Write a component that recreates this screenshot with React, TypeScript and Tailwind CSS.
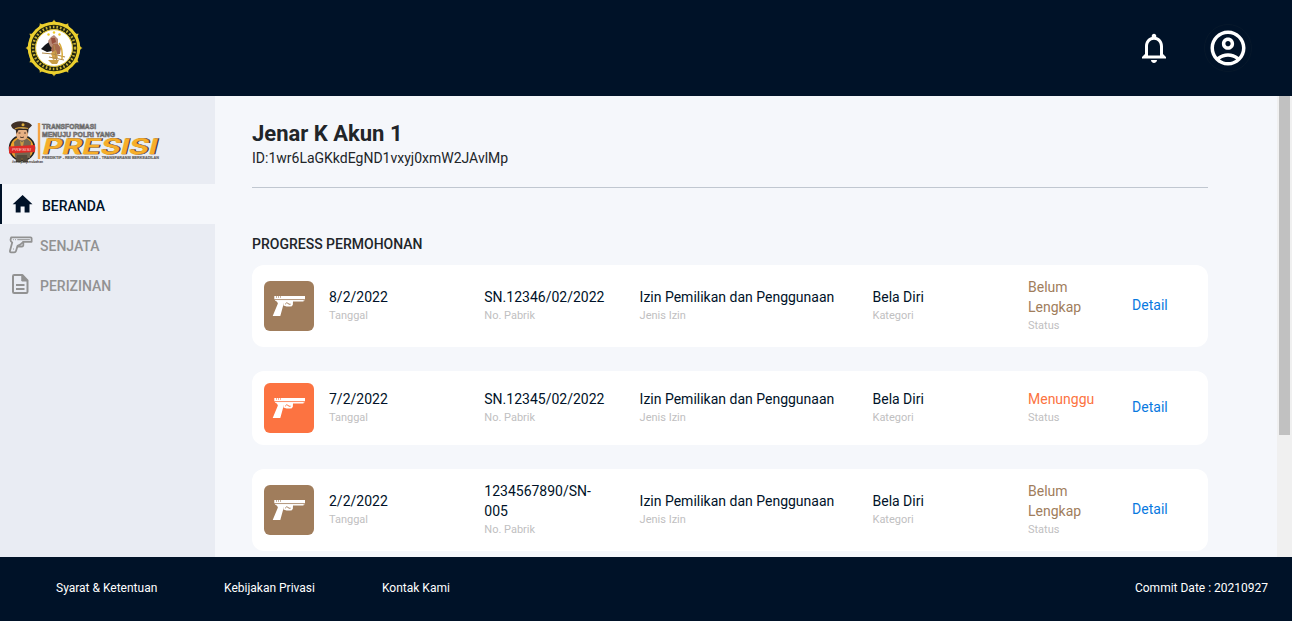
import React from "react";

type Tone = "brown" | "orange";

interface Permit {
  date: string;
  serial: string;
  status: string;
  tone: Tone;
}

const permits: Permit[] = [
  { date: "8/2/2022", serial: "SN.12346/02/2022", status: "Belum Lengkap", tone: "brown" },
  { date: "7/2/2022", serial: "SN.12345/02/2022", status: "Menunggu", tone: "orange" },
  { date: "2/2/2022", serial: "1234567890/SN-005", status: "Belum Lengkap", tone: "brown" },
];

const tileTone: Record<Tone, string> = {
  brown: "bg-[#a07d5c] text-[#a07d5c]",
  orange: "bg-[#fc7341] text-[#fc7341]",
};
const textTone: Record<Tone, string> = { brown: "text-[#a07d5c]", orange: "text-[#fc7341]" };

const spikes = Array.from({ length: 12 }, (_, i) => i * 30);

function Emblem() {
  return (
    <svg width="58" height="58" viewBox="0 0 58 58" className="block">
      {spikes.map((a) => (
        <path key={a} d="M22 5 Q28 3.500 29 .5 Q30 3.500 36 5 Z" fill="#e3c52c" transform={`rotate(${a} 29 29)`} />
      ))}
      <circle cx="29" cy="29" r="26.300" fill="#ecd02e" />
      <circle cx="29" cy="29" r="21" fill="none" stroke="#20240f" strokeWidth="4.400" />
      <circle cx="29" cy="29" r="21" fill="none" stroke="#c8b236" strokeWidth="2.600" strokeDasharray="1.600 2" />
      <circle cx="29" cy="29" r="18.400" fill="#fff" stroke="#d8bd33" strokeWidth="1" />
      <g fill="#f0cc28">
        <circle cx="23.500" cy="15.500" r="1.200" />
        <circle cx="29" cy="13.500" r="1.200" />
        <circle cx="34.500" cy="15.500" r="1.200" />
      </g>
      <path d="M16 30 L20 26 L24 23 L27 28 L27 32 L22 33 Z" fill="#15161a" />
      <path d="M23 22 L26 18 L29 16 L33 20 L33 27 L28 30 L25 27 Z" fill="#b88a76" />
      <path d="M26 19 L30 19 L31 23 L27 25 Z" fill="#97503e" />
      <path d="M28 25 L33 25 L36 29 L35 35 L29 36 L26 31 Z" fill="#a76b4f" />
      <path d="M26 34 L31 31 L33 39 L28 41 Z" fill="#d6a448" />
      <path d="M17 34 L28 35 L40 38 M24 38 L39 41 M29 26 L32 44" stroke="#b18a4b" strokeWidth="1.100" fill="none" />
      <path d="M34 24 Q38 29 37 40" stroke="#d8ab3a" strokeWidth="1.500" fill="none" />
      <path d="M23 41 L34 41 L32 45 L27 45 Z" fill="#c79c45" />
    </svg>
  );
}

function Brand() {
  return (
    <svg width="190" height="46" viewBox="0 0 190 46" className="block overflow-visible">
      <ellipse cx="14" cy="28" rx="13.300" ry="13.200" fill="#242321" />
      <ellipse cx="14" cy="28" rx="11.600" ry="11.600" fill="#eca32b" />
      <path d="M6 22 L10 18.500 L19 18.500 L23 22 L22 38 L7 38 Z" fill="#756650" />
      <path d="M9 35 h10 l1 7 h-5 l-1-4 l-1 4 H7.500 Z" fill="#554b3b" />
      <path d="M8 9 h12 v6 q-1 5-6 5.500 q-5-.5-6-5.500 Z" fill="#e7b083" />
      <path d="M7.500 9 l1 5 l2-4 h8 l1.500 4 l.6-5 Z" fill="#302723" />
      <path d="M3 5 Q7 .5 15 1.500 Q22 2 24 5.500 L20.500 9 Q13 7.500 8 10 Q3.500 9 3 5 Z" fill="#403026" />
      <path d="M7 8.700 Q13 6.500 20 8.500" stroke="#ce9c38" strokeWidth="1.200" fill="none" />
      <circle cx="15" cy="4.800" r="1.500" fill="#dfaf3c" />
      <path d="M10.500 13 h2 M16 13 h2 M12 17 q2 1.200 4 0" stroke="#412b21" strokeWidth=".9" fill="none" />
      <path d="M12 20.500 l2 2 l2-2 l-1 6 h-2 Z" fill="#cc9c45" />
      <path d="M1 26.500 L27 25 V32 L1 33.500 Z" fill="#dd2b27" />
      <text x="4" y="31.200" fontFamily="Liberation Sans, sans-serif" fontSize="4" fontStyle="italic" fill="#fbd5d1" textLength="19" lengthAdjust="spacingAndGlyphs">PRESISI</text>
      <text x="4" y="42.500" fontFamily="Liberation Sans, sans-serif" fontSize="3.600" fontWeight="700" fill="#33312e" textLength="31" lengthAdjust="spacingAndGlyphs">#setapakperubahan</text>
      <rect x="29.800" y="3" width="2.400" height="36" fill="#f5a444" />
      <g fontFamily="Liberation Sans, sans-serif" fontWeight="700" fill="#a3a2a1" stroke="#5e5d5d" strokeWidth=".55">
        <text x="34" y="9" fontSize="7.500" textLength="54" lengthAdjust="spacingAndGlyphs">TRANSFORMASI</text>
        <text x="34" y="17" fontSize="7.500" textLength="73" lengthAdjust="spacingAndGlyphs">MENUJU POLRI YANG</text>
      </g>
      <g transform="translate(33 34.300) skewX(-14)" fontFamily="Inter, sans-serif" fontWeight="600" fontSize="21.500">
        <text x="1" y="-.8" fill="#34322f" stroke="#34322f" strokeWidth=".5" textLength="115" lengthAdjust="spacingAndGlyphs">PRESISI</text>
        <text x="0" y="0" fill="#f7ae29" stroke="#f7ae29" strokeWidth=".3" textLength="115" lengthAdjust="spacingAndGlyphs">PRESISI</text>
      </g>
      <text x="34" y="39.300" fontFamily="Liberation Sans, sans-serif" fontSize="4.400" fontWeight="700" fill="#656463" stroke="#656463" strokeWidth=".2" textLength="117" lengthAdjust="spacingAndGlyphs">PREDIKTIF - RESPONSIBILITAS - TRANSPARANSI BERKEADILAN</text>
    </svg>
  );
}

function Pistol() {
  return (
    <svg width="50" height="50" viewBox="0 0 50 50" fill="#fff" className="block">
      <path d="M10.300 14.900 H41 V18.300 H10.300 Z" />
      <path d="M11 18.800 H40.500 V19.600 H39.500 V20.600 H29 V21.500 H20 L16.300 35 H8.700 L13.900 22.500 Q13.700 20.300 11 19.500 Z" />
      <path d="M11 18.600 H40.500" stroke="currentColor" strokeWidth=".5" />
      <path d="M19.500 20.600 H28.900 V23.400 Q28.300 25.600 26.200 25.600 H22.500 L19.500 24.400 Z" />
      <path d="M21.200 23.200 Q22.700 20.900 23.800 22.300 T26.600 23.200" fill="none" stroke="currentColor" strokeWidth="1" />
      <path d="M12.500 14.900 v2 M14.500 14.900 v2 M16.500 14.900 v2" stroke="currentColor" strokeWidth=".6" />
    </svg>
  );
}

function HomeIcon() {
  return (
    <svg width="24" height="24" viewBox="0 0 24 24" fill="currentColor" className="block">
      <path d="M9.600 20.600v-6.200h4v6.200h4.900v-8.400h3L11.600 3 1.700 12.200h3v8.400z" />
    </svg>
  );
}

function PistolOutline() {
  return (
    <svg width="24" height="18" viewBox="0 0 24 18" fill="none" stroke="currentColor" strokeWidth="1.800" strokeLinejoin="round" strokeLinecap="round" className="mt-px block">
      <path d="M2.200 1.300 H21.500 Q22.600 1.300 22.600 2.300 V5.800 H14.300 L11.200 8.600 L8.600 9.800 L7 15 Q6.600 16.300 5.200 16.300 H2 Q.7 16.300 1 14.800 L3.200 6.500 Q1.300 5.300 1.600 3.500 Z" />
      <path d="M14.300 6 V9.300 Q14.100 10.500 13 10.500 H8.700" />
      <path d="M4.300 3.700 h.1 M6.500 3.700 h.1 M8.700 3.700 H20.500 M4.500 13 h.1" strokeWidth="1" />
    </svg>
  );
}

function DocIcon() {
  return (
    <svg width="24" height="24" viewBox="0 0 24 24" fill="none" stroke="currentColor" strokeWidth="2" strokeLinejoin="round" className="block">
      <path d="M13.300 3 H5.200 Q4 3 4 4.200 V19.800 Q4 21 5.200 21 H17.300 Q18.500 21 18.500 19.800 V8.500 Z" />
      <path d="M12.800 3 V9 H18.500 L13.500 3.300" fill="currentColor" strokeWidth="1" />
      <path d="M7 13 h8.500 M7 17 h8.500" strokeWidth="1.800" />
    </svg>
  );
}

function BellIcon() {
  return (
    <svg width="36" height="36" viewBox="0 0 24 24" fill="#fff" className="block">
      <path d="M12 22c1.100 0 2-.9 2-2h-4c0 1.100.9 2 2 2zm6-6v-5c0-3.070-1.630-5.640-4.500-6.320V4c0-.83-.67-1.500-1.500-1.500s-1.500.67-1.500 1.500v.68C7.640 5.360 6 7.920 6 11v5l-2 2v1h16v-1l-2-2zm-2 1H8v-6c0-2.480 1.510-4.500 4-4.500s4 2.020 4 4.500v6z" />
    </svg>
  );
}

function AccountIcon() {
  return (
    <svg width="42" height="42" viewBox="0 0 24 24" fill="#fff" className="block">
      <path d="M12 2C6.480 2 2 6.480 2 12s4.480 10 10 10 10-4.480 10-10S17.520 2 12 2zM7.350 18.500C8.660 17.560 10.260 17 12 17s3.340.56 4.650 1.500c-1.310.94-2.910 1.500-4.650 1.500s-3.340-.56-4.650-1.500zm10.790-1.380C16.450 15.800 14.320 15 12 15s-4.450.8-6.140 2.120C4.700 15.730 4 13.950 4 12c0-4.420 3.580-8 8-8s8 3.580 8 8c0 1.950-.7 3.730-1.860 5.120z" />
      <path d="M12 6c-1.930 0-3.500 1.570-3.500 3.500S10.070 13 12 13s3.500-1.570 3.500-3.500S13.930 6 12 6zm0 5c-.83 0-1.500-.67-1.500-1.500S11.170 8 12 8s1.500.67 1.500 1.500S12.830 11 12 11z" />
    </svg>
  );
}

function Field({ value, label, tone = "" }: { value: string; label: string; tone?: string }) {
  return (
    <div>
      <div className={`text-sm leading-5 ${tone}`}>{value}</div>
      <div className="text-[11px] leading-[18px] text-[#bfc0c1]">{label}</div>
    </div>
  );
}

function PermitCard({ permit }: { permit: Permit }) {
  return (
    <article className="grid grid-cols-[65px_155.300px_155.300px_232.900px_155.500px_104.100px_1fr] items-center rounded-xl bg-white p-3 text-[#001228]">
      <div className={`size-[50px] overflow-hidden rounded-md ${tileTone[permit.tone]}`}>
        <Pistol />
      </div>
      <Field value={permit.date} label="Tanggal" />
      <div className="pr-10">
        <Field value={permit.serial} label="No. Pabrik" tone={permit.serial.startsWith("SN") ? "whitespace-nowrap" : "w-[115px]"} />
      </div>
      <Field value="Izin Pemilikan dan Penggunaan" label="Jenis Izin" />
      <Field value="Bela Diri" label="Kategori" />
      <div className="pr-6">
        <Field value={permit.status} label="Status" tone={textTone[permit.tone]} />
      </div>
      <a href="#detail" className="pb-[2px] text-sm leading-5 text-[#0879df]">Detail</a>
    </article>
  );
}

export default function App() {
  return (
    <div className="flex h-[621px] w-full flex-col overflow-hidden bg-[#f5f7fb] font-['Roboto',sans-serif] text-[#212529]">
      <header className="flex h-24 shrink-0 items-center justify-between bg-[#001228] pr-10 pl-[25px]">
        <Emblem />
        <div className="flex items-center gap-8">
          <button aria-label="Notifikasi"><BellIcon /></button>
          <button aria-label="Akun" className="flex size-12 items-center justify-center rounded-full border border-[#07182b]"><AccountIcon /></button>
        </div>
      </header>

      <div className="flex min-h-0 flex-1">
        <aside className="w-[215px] shrink-0 bg-[#e9ecf3] text-sm font-medium text-[#929292]">
          <div className="h-[88px] pt-6 pl-2"><Brand /></div>
          <nav>
            <a href="#beranda" className="flex h-10 items-center gap-[7px] border-l-2 border-[#001228] bg-[#f5f7fb] pl-[9px] text-[#001228]">
              <HomeIcon />
              <span className="pt-[3px]">BERANDA</span>
            </a>
            <a href="#senjata" className="flex h-10 items-center gap-[7px] pl-[9px]">
              <PistolOutline />
              <span className="pt-[3px]">SENJATA</span>
            </a>
            <a href="#perizinan" className="flex h-10 items-center gap-[7px] pl-[9px]">
              <DocIcon />
              <span className="pt-[3px]">PERIZINAN</span>
            </a>
          </nav>
        </aside>

        <main className="min-w-0 flex-1 overflow-hidden pt-[25px] pl-[37px]">
          <div className="w-[956px]">
            <h1 className="text-[22px] leading-[26px] font-bold">Jenar K Akun 1</h1>
            <p className="-mt-px text-sm leading-6">ID:1wr6LaGKkdEgND1vxyj0xmW2JAvlMp</p>
            <hr className="mt-[17px] border-[#c0c7d0]" />
            <h2 className="mt-[46px] text-sm leading-5 font-medium">PROGRESS PERMOHONAN</h2>
            <section className="mt-[11px] flex flex-col gap-6">
              {permits.map((p) => (
                <PermitCard key={p.date} permit={p} />
              ))}
            </section>
          </div>
        </main>

        <div className="flex w-[15px] shrink-0 justify-center bg-[#f0f0f0]">
          <div className="h-[339px] w-[11px] bg-[#c1c1c1]" />
        </div>
      </div>

      <footer className="flex h-16 shrink-0 items-center bg-[#001228] pr-6 pb-[2px] pl-14 text-xs text-white">
        <a href="#syarat" className="w-[168px]">Syarat &amp; Ketentuan</a>
        <a href="#privasi" className="w-[158px]">Kebijakan Privasi</a>
        <a href="#kontak">Kontak Kami</a>
        <span className="ml-auto">Commit Date : 20210927</span>
      </footer>
    </div>
  );
}
